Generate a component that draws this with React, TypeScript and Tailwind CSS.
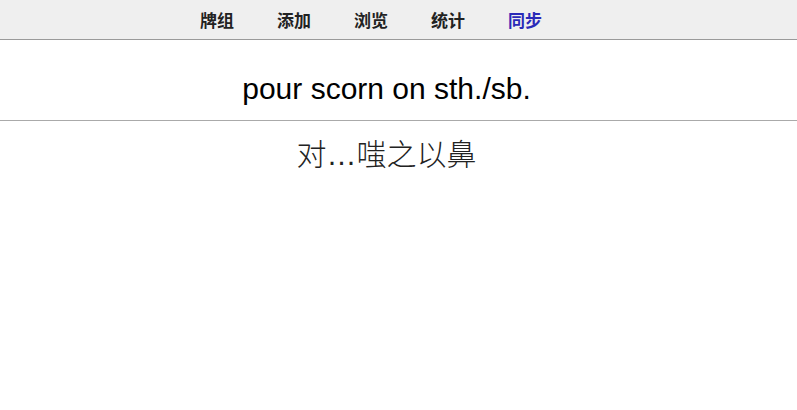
const NAV = ['牌组', '添加', '浏览', '统计', '同步']

export default function App() {
  return (
    <div className="w-[797px] h-[410px] bg-white font-['Liberation_Sans',Arial,sans-serif]">
      <div className="h-10 bg-[#efefef] border-b border-[#9a9a9a] flex items-center pl-[200px]">
        {NAV.map((item, i) => (
          <span
            key={item}
            className={`font-['Noto_Sans_CJK_SC',sans-serif] text-[17px] font-bold w-[77px] shrink-0 ${i === 4 ? 'text-[#2a2ab8]' : 'text-[#222]'}`}
          >
            {item}
          </span>
        ))}
      </div>
      <div className="h-[81px] flex items-center justify-center pr-[24px] text-[30px] text-black border-b border-[#aaa] pt-[17px]">
        pour scorn on sth./sb.
      </div>
      <div className="font-['Liberation_Sans','Noto_Sans_CJK_SC',sans-serif] text-center pr-[24px] text-[30px] text-[#222] font-light pt-[19px] leading-none">
        对…嗤之以鼻
      </div>
    </div>
  )
}
